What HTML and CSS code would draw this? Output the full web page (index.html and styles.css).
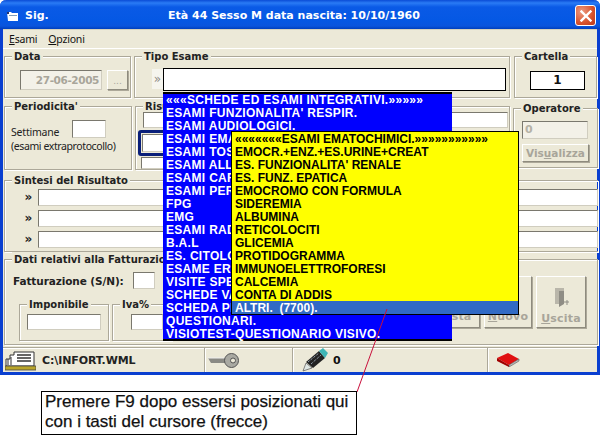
FILE: index.html
```html
<!DOCTYPE html>
<html lang="it">
<head>
<meta charset="utf-8">
<title>Sig.</title>
<link rel="stylesheet" href="styles.css">
</head>
<body>
<div class="window">
  <header class="titlebar">
    <svg class="app-icon" width="12" height="12" viewBox="0 0 12 12"><path d="M0 2h4l1 1h6v8H1z" fill="#fff"/><path d="M2 5h8v1H2z" fill="#7f9db9"/><path d="M0 2h2v2H0z" fill="#23346e"/></svg>
    <span class="app-name">Sig.</span>
    <span class="title-text">Età 44 Sesso M data nascita: 10/10/1960</span>
    <span class="close"><svg width="12" height="12" viewBox="0 0 12 12"><path d="M1.5 1.5l9 9M10.5 1.5l-9 9" stroke="#fff" stroke-width="2.4" stroke-linecap="square"/></svg></span>
  </header>
  <nav class="menubar"><span><u>E</u>sami</span><span><u>O</u>pzioni</span></nav>
  <main class="client">
    <div class="row row-top">
      <section class="group g-data">
        <h2 class="legend">Data</h2>
        <div class="inline">
          <div class="field date">27-06-2005</div>
          <div class="btn dots">...</div>
        </div>
      </section>
      <section class="group g-tipo">
        <h2 class="legend">Tipo Esame</h2>
        <div class="inline">
          <span class="chev faded">»</span>
          <div class="tipo-input"></div>
        </div>
      </section>
      <section class="group g-cart">
        <h2 class="legend">Cartella</h2>
        <div class="cart-box">1</div>
      </section>
    </div>
    <div class="row row-mid">
      <section class="group g-per">
        <h2 class="legend">Periodicita'</h2>
        <div class="sett"><span>Settimane</span><div class="field sett-input"></div></div>
        <div class="small">(esami extraprotocollo)</div>
      </section>
      <section class="group g-ris">
        <h2 class="legend">Risultato</h2>
        <div class="field ris-input"></div>
        <div class="ris-focus"><div class="field ris-inner"></div></div>
        <div class="field ris-third"></div>
      </section>
      <section class="group g-op">
        <h2 class="legend">Operatore</h2>
        <div class="field op-input">0</div>
        <div class="btn vis">Vis<u>u</u>alizza</div>
      </section>
    </div>
    <section class="group g-sin">
      <h2 class="legend">Sintesi del Risultato</h2>
      <div class="sin-row"><span class="chev">»</span><div class="field sin-input"></div></div>
      <div class="sin-row"><span class="chev">»</span><div class="field sin-input"></div></div>
      <div class="sin-row"><span class="chev">»</span><div class="field sin-input"></div></div>
    </section>
    <section class="group g-dati">
      <h2 class="legend">Dati relativi alla Fatturazione</h2>
      <div class="dati-body">
        <div class="dati-left">
          <div class="fatt"><span>Fatturazione (S/N):</span><div class="field fatt-input"></div></div>
          <div class="amounts">
            <section class="group g-imp"><h2 class="legend">Imponibile</h2><div class="field imp-input"></div></section>
            <section class="group g-iva"><h2 class="legend">Iva%</h2><div class="field iva-input"></div></section>
          </div>
        </div>
        <div class="actions">
          <div class="btn act"><span>Lista</span></div>
          <div class="btn act"><span><u>N</u>uovo</span></div>
          <div class="btn act exit">
            <svg width="18" height="22" viewBox="0 0 18 22"><path d="M3 2h9v16l-5 3V5z" fill="#8f8d85"/><path d="M3 2h9v3H7v13H3z" fill="#b9b6aa"/><path d="M12 16h5M15 14v5" stroke="#8f8d85" fill="none"/></svg>
            <span><u>U</u>scita</span>
          </div>
        </div>
      </div>
    </section>
  </main>
  <footer class="status">
    <div class="panel p-file">
      <svg width="31" height="21" viewBox="0 0 31 21"><path d="M1 9h4V5h4V2h20v14H1z" fill="#fff" stroke="#333"/><path d="M12 5h14M12 8h14M12 11h14" stroke="#333" stroke-width="1.4"/><path d="M3 9v6M6 7v8" stroke="#333"/><path d="M0 16h31v4H0z" fill="#b9a52a" stroke="#444" stroke-width=".8"/></svg>
      <span class="file">C:\INFORT.WML</span>
    </div>
    <div class="panel p-key">
      <svg width="32" height="15" viewBox="0 0 32 15"><path d="M1 5h18v5H4z" fill="#8a8a84"/><path d="M1 5h18" stroke="#eee"/><circle cx="24.500" cy="7.500" r="7" fill="#a9a9a2" stroke="#555"/><circle cx="26" cy="7.500" r="2.500" fill="#ece9d8" stroke="#555"/></svg>
    </div>
    <div class="panel p-pen">
      <svg width="26" height="24" viewBox="0 0 26 24"><path d="M1 23l3-8 6 5z" fill="#dfe7e4" stroke="#555" stroke-width=".7"/><path d="M4 14L17 3l6 7-12 10z" fill="#222"/><path d="M6 14l11-9M9 16l10-9" stroke="#bcd" stroke-dasharray="1 1"/><path d="M17 3l4-3 5 5-3 5z" fill="#3fb5b5"/></svg>
      <span class="count">0</span>
    </div>
    <div class="panel p-book">
      <svg width="23" height="14" viewBox="0 0 23 14"><path d="M0 5L11 0l11 6-10 6z" fill="#e01010"/><path d="M0 5v3l12 6v-2z" fill="#a00000"/><path d="M12 12l10-6v2l-10 6z" fill="#bbb" stroke="#444" stroke-width=".5"/></svg>
    </div>
  </footer>
  <ul class="list list-blue">
    <li>«««SCHEDE ED ESAMI INTEGRATIVI.»»»»»</li>
    <li>ESAMI FUNZIONALITA' RESPIR.</li>
    <li>ESAMI AUDIOLOGICI.</li>
    <li>ESAMI EMATOCHIMICI.</li>
    <li>ESAMI TOSSICOLOGICI.</li>
    <li>ESAMI ALLERGOLOGICI.</li>
    <li>ESAMI CARDIOLOGICI.</li>
    <li>ESAMI PERIMETRICI.</li>
    <li>FPG</li>
    <li>EMG</li>
    <li>ESAMI RADIOLOGICI.</li>
    <li>B.A.L</li>
    <li>ES. CITOLOGICO</li>
    <li>ESAME ERGOMETRICO</li>
    <li>VISITE SPECIALISTICHE</li>
    <li>SCHEDE VALUTAZIONE</li>
    <li>SCHEDA PERSONALE</li>
    <li>QUESTIONARI.</li>
    <li>VISIOTEST-QUESTIONARIO VISIVO.</li>
  </ul>
  <ul class="list list-yellow">
    <li>«««««««ESAMI EMATOCHIMICI.»»»»»»»»»»»</li>
    <li>EMOCR.+ENZ.+ES.URINE+CREAT</li>
    <li>ES. FUNZIONALITA' RENALE</li>
    <li>ES. FUNZ. EPATICA</li>
    <li>EMOCROMO CON FORMULA</li>
    <li>SIDEREMIA</li>
    <li>ALBUMINA</li>
    <li>RETICOLOCITI</li>
    <li>GLICEMIA</li>
    <li>PROTIDOGRAMMA</li>
    <li>IMMUNOELETTROFORESI</li>
    <li>CALCEMIA</li>
    <li>CONTA DI ADDIS</li>
    <li class="selected">ALTRI.  (7700).</li>
  </ul>
</div>
<svg class="leader" width="40" height="90" viewBox="0 0 40 90"><path d="M31 0L1 83" stroke="#c8103c" fill="none"/></svg>
<div class="callout">Premere F9 dopo essersi posizionati qui<br>con i tasti del cursore (frecce)</div>
</body>
</html>
```
FILE: styles.css
```css
* { box-sizing: border-box; }
html, body { margin: 0; padding: 0; background: #fff; }
body { position: relative; width: 604px; height: 441px; overflow: hidden; font-family: "Liberation Sans", Arial, sans-serif; }
h2 { margin: 0; font: inherit; }
ul { margin: 0; padding: 0; list-style: none; }

.window { position: relative; width: 600px; height: 375px; background: #ece9d8; border: 3px solid #0a3fd0; border-top: 0; border-radius: 6px 6px 0 0; display: flex; flex-direction: column; color: #111; }

.titlebar { height: 29px; margin: 0 -3px; padding: 2px 2px 0 7px; display: flex; align-items: center; border-radius: 6px 6px 0 0; background: linear-gradient(#0a4cd6 0, #2a7bf5 3px, #0a5ae6 7px, #0558e4 20px, #0a55dd 26px, #003fbd 29px); color: #fff; font-weight: bold; font-size: 12px; }
.app-icon { flex: none; }
.app-name { margin-left: 6px; width: 143px; font-family: "DejaVu Sans", sans-serif; font-size: 11px; }
.title-text { font-family: "DejaVu Sans", sans-serif; font-size: 11px; flex: 1; }
.close { width: 21px; height: 21px; border: 1px solid #fff; border-radius: 3px; background: radial-gradient(circle at 30% 30%, #ec9a80, #d8522c 60%, #b8381a); display: flex; align-items: center; justify-content: center; margin-right: 2px; }

.menubar { height: 20px; flex: none; display: flex; gap: 11px; padding: 2px 0 0 6px; font-family: "Noto Sans", "Liberation Sans", sans-serif; font-size: 10.5px; line-height: 16px; border-bottom: 1px solid #fff; box-shadow: 0 1px 0 #d6d2bd inset; letter-spacing: -.2px; }

.client { flex: 1; padding: 7px 0 0 1px; display: flex; flex-direction: column; min-height: 0; }
.row { display: flex; flex: none; }
.row-top { height: 42px; }
.row-mid { height: 64px; margin-top: 8px; }

.group { border: 1px solid #aca899; box-shadow: 1px 1px 0 #fff, inset 1px 1px 0 #fff; flex: none; }
.legend { display: block; width: fit-content; margin: -8px 0 0 7px; padding: 0 2px; height: 14px; line-height: 16px; background: #ece9d8; font-family: "DejaVu Sans", sans-serif; font-weight: bold; font-size: 10px; color: #222; letter-spacing: 0; }

.g-data { width: 127px; margin-right: 3px; }
.g-tipo { width: 376px; margin-right: 4px; }
.g-cart { width: 83px; }
.inline { display: flex; align-items: flex-start; margin-top: 6px; }
.field { background: #fff; border: 1px solid #d0cdbf; border-top-color: #7a786e; border-left-color: #7a786e; }
.date { width: 82px; height: 20px; margin: 1px 0 0 15px; background: #f3f1e8; color: #a8a59a; font: bold 10.5px/18px "DejaVu Sans", sans-serif; text-align: right; padding-right: 2px; letter-spacing: -.4px; }
.btn { background: #ece9d8; border: 1px solid #fff; border-right-color: #8e8b7e; border-bottom-color: #8e8b7e; box-shadow: 1px 1px 0 #aca899; color: #a8a59a; font-family: "DejaVu Sans", sans-serif; font-weight: bold; font-size: 11px; text-align: center; }
.dots { width: 21px; height: 20px; margin: 1px 0 0 5px; font-weight: normal; font-size: 9px; line-height: 20px; }
.chev { font-family: "DejaVu Sans", sans-serif; font-size: 12px; font-weight: bold; line-height: 16px; color: #222; width: 12px; text-align: center; }
.faded { margin-left: 17px; width: 11px; height: 20px; background: #f6f5ee; color: #8f8d85; line-height: 20px; font-weight: normal; }
.tipo-input { width: 343px; height: 23px; margin-top: -1px; background: #fff; border: 1px solid #000; }
.cart-box { width: 55px; height: 19px; margin: 8px 0 0 15px; background: #fff; border: 1px solid #000; text-align: center; font: bold 12px/17px "DejaVu Sans", sans-serif; }

.g-per { width: 128px; margin-right: 3px; }
.sett { display: flex; align-items: flex-start; margin: 0 0 0 6px; font-size: 10.5px; font-family: "Noto Sans", sans-serif; color: #222; letter-spacing: -.2px; }
.sett span { width: 61px; margin-top: 12px; line-height: 14px; }
.sett-input { width: 34px; height: 18px; margin-top: 7px; }
.small { margin: 0 0 0 6px; font-size: 10.5px; font-family: "Noto Sans", sans-serif; line-height: 14px; color: #222; letter-spacing: -.4px; }

.g-ris { width: 375px; margin-right: 3px; }
.ris-input { width: 365px; height: 16px; margin: -1px 0 0 7px; }
.ris-focus { width: 100px; height: 26px; margin: 2px 0 0 2px; border: 3px solid #0a1f7a; border-radius: 3px; padding: 1px; }
.ris-inner { height: 18px; }
.ris-third { width: 100px; height: 12px; margin: 1px 0 0 5px; }
.g-op { width: 85px; margin-top: 2px; height: 60px; }
.op-input { width: 66px; height: 18px; margin: 6px 0 0 8px; background: #f3f1e8; color: #b5b2a6; font: bold 11px/16px "DejaVu Sans", sans-serif; padding-left: 2px; }
.vis { width: 67px; height: 18px; margin: 5px 0 0 8px; line-height: 16px; font-size: 10.5px; }

.g-sin { margin-top: 10px; width: 594px; height: 72px; border-right: 0; }
.sin-row { display: flex; align-items: flex-start; height: 21px; padding-left: 14px; }
.sin-row .chev { width: 19px; }
.sin-input { flex: 1; height: 17px; }
.g-sin .legend { margin-bottom: 2px; }

.g-dati { margin-top: 7px; width: 594px; height: 86px; }
.dati-body { display: flex; justify-content: space-between; }
.dati-left { padding-left: 8px; }
.fatt { display: flex; align-items: flex-start; font: bold 10.5px/16px "DejaVu Sans", sans-serif; color: #222; letter-spacing: -.1px; margin-top: 6px; }
.fatt span { width: 120px; margin-top: 1px; }
.fatt-input { width: 22px; height: 17px; }
.amounts { display: flex; gap: 3px; margin-top: 15px; margin-left: 6px; }
.g-imp { width: 90px; height: 37px; }
.g-iva { width: 60px; height: 37px; }
.imp-input { width: 74px; height: 16px; margin: 3px 0 0 7px; }
.iva-input { width: 32px; height: 16px; margin: 3px 0 0 18px; }
.actions { display: flex; gap: 4px; padding: 10px 11px 0 0; }
.act { width: 48px; height: 52px; display: flex; flex-direction: column; justify-content: flex-end; align-items: center; padding-bottom: 2px; font-size: 11px; line-height: 16px; letter-spacing: .2px; }
.exit { width: 50px; justify-content: flex-start; padding-top: 9px; gap: 3px; }
.exit svg { flex: none; }

.status { height: 25px; flex: none; display: flex; align-items: center; border-top: 1px solid #aca899; box-shadow: inset 0 1px 0 #fff; }
.panel { height: 100%; display: flex; align-items: center; border-right: 1px solid #aca899; box-shadow: 1px 0 0 #fff; flex: none; }
.p-file { width: 202px; padding-left: 2px; }
.file { margin-left: 6px; font: bold 11px "DejaVu Sans", sans-serif; color: #222; letter-spacing: -.1px; }
.p-key { width: 88px; padding: 0 0 0 2px; }
.p-pen { width: 195px; padding: 0 0 0 9px; }
.count { margin-left: 5px; font: bold 11px "DejaVu Sans", sans-serif; }
.p-book { border-right: 0; box-shadow: none; padding-left: 9px; }

.list { position: absolute; font-weight: bold; font-size: 12px; letter-spacing: .3px; }
.list li { white-space: pre; height: 13px; line-height: 13px; }
.list-blue { left: 160px; top: 92px; width: 289px; height: 249px; background: #0000ff; border: 1px solid #000; border-width: 2px 0 2px 0; padding: 0 0 0 3px; color: #fff; }
.list-yellow { left: 228px; top: 131px; width: 288px; height: 184px; background: #ffff00; border: 1px solid #000; padding: 0; color: #000; letter-spacing: 0; }
.list-yellow li { padding-left: 3px; line-height: 15px; }
.list-yellow .selected { background: #316ac5; color: #fff; }

.leader { position: absolute; left: 356px; top: 309px; }
.callout { position: absolute; left: 41px; top: 391px; width: 316px; height: 44px; background: #fff; border: 1px solid #000; padding: 0 0 0 3px; font-size: 17px; line-height: 20px; color: #111; -webkit-text-stroke: .25px #111; }
```
